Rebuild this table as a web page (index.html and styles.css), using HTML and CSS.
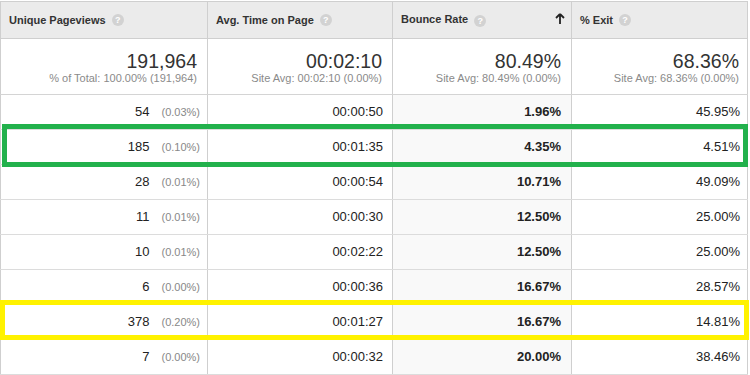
FILE: index.html
```html
<!DOCTYPE html>
<html>
<head>
  <title>Pages report</title>
  <link rel="stylesheet" href="styles.css">
</head>
<body>
  <div class="report">
    <div class="row head">
      <div class="cell">Unique Pageviews <span class="help">?</span></div>
      <div class="cell">Avg. Time on Page <span class="help">?</span></div>
      <div class="cell sorted-head">
        <span>Bounce Rate <span class="help">?</span></span>
        <svg class="sort-arrow" width="10" height="12" viewBox="0 0 10 12">
          <path d="M5 1 L1 5 M5 1 L9 5 M5 1 L5 11" stroke="#222" stroke-width="1.8" fill="none"/>
        </svg>
      </div>
      <div class="cell">% Exit <span class="help">?</span></div>
    </div>

    <div class="row summary">
      <div class="cell c1"><span class="big">191,964</span><span class="small">% of Total: 100.00% (191,964)</span></div>
      <div class="cell c2"><span class="big">00:02:10</span><span class="small">Site Avg: 00:02:10 (0.00%)</span></div>
      <div class="cell c3"><span class="big">80.49%</span><span class="small">Site Avg: 80.49% (0.00%)</span></div>
      <div class="cell c4"><span class="big">68.36%</span><span class="small">Site Avg: 68.36% (0.00%)</span></div>
    </div>

    <div class="row data">
      <div class="cell c1">54<span class="pct">(0.03%)</span></div>
      <div class="cell c2">00:00:50</div>
      <div class="cell c3 sorted">1.96%</div>
      <div class="cell c4">45.95%</div>
    </div>
    <div class="row data mark-green">
      <div class="cell c1">185<span class="pct">(0.10%)</span></div>
      <div class="cell c2">00:01:35</div>
      <div class="cell c3 sorted">4.35%</div>
      <div class="cell c4">4.51%</div>
    </div>
    <div class="row data">
      <div class="cell c1">28<span class="pct">(0.01%)</span></div>
      <div class="cell c2">00:00:54</div>
      <div class="cell c3 sorted">10.71%</div>
      <div class="cell c4">49.09%</div>
    </div>
    <div class="row data">
      <div class="cell c1">11<span class="pct">(0.01%)</span></div>
      <div class="cell c2">00:00:30</div>
      <div class="cell c3 sorted">12.50%</div>
      <div class="cell c4">25.00%</div>
    </div>
    <div class="row data">
      <div class="cell c1">10<span class="pct">(0.01%)</span></div>
      <div class="cell c2">00:02:22</div>
      <div class="cell c3 sorted">12.50%</div>
      <div class="cell c4">25.00%</div>
    </div>
    <div class="row data">
      <div class="cell c1">6<span class="pct">(0.00%)</span></div>
      <div class="cell c2">00:00:36</div>
      <div class="cell c3 sorted">16.67%</div>
      <div class="cell c4">28.57%</div>
    </div>
    <div class="row data mark-yellow">
      <div class="cell c1">378<span class="pct">(0.20%)</span></div>
      <div class="cell c2">00:01:27</div>
      <div class="cell c3 sorted">16.67%</div>
      <div class="cell c4">14.81%</div>
    </div>
    <div class="row data">
      <div class="cell c1">7<span class="pct">(0.00%)</span></div>
      <div class="cell c2">00:00:32</div>
      <div class="cell c3 sorted">20.00%</div>
      <div class="cell c4">38.46%</div>
    </div>
  </div>
</body>
</html>
```

FILE: styles.css
```css
* {
  margin: 0;
  padding: 0;
  box-sizing: border-box;
}

body {
  font-family: 'Liberation Sans', Arial, sans-serif;
  background: white;
  color: #222;
  overflow: hidden;
}

.report {
  width: 748px;
  margin-top: 1px;
  border-top: 1px solid #cfcfcf;
}

.row {
  display: grid;
  grid-template-columns: 207px 185px 179px 177px;
  border-bottom: 1px solid #dcdcdc;
  position: relative;
}

.cell {
  border-left: 1px solid #cfcfcf;
}

.cell:last-child {
  border-right: 1px solid #cfcfcf;
}

/* header */
.head {
  height: 37px;
  background: #ebebeb;
  border-bottom-color: #cfcfcf;
}

.head .cell {
  display: flex;
  align-items: center;
  padding-left: 8px;
  font-size: 11px;
  font-weight: bold;
  color: #333;
  white-space: pre;
}

.sorted-head {
  justify-content: space-between;
  padding-right: 6px;
}

.help {
  display: inline-flex;
  align-items: center;
  justify-content: center;
  width: 12px;
  height: 12px;
  margin-left: 3px;
  border-radius: 50%;
  background: #d2d2d2;
  color: white;
  font-size: 9px;
  font-weight: bold;
  vertical-align: middle;
}

.sort-arrow {
  margin-top: -2px;
}

/* summary */
.summary {
  height: 56px;
  border-bottom-color: #d4d4d4;
}

.summary .cell {
  display: flex;
  flex-direction: column;
  justify-content: center;
  align-items: flex-end;
  padding-right: 10px;
  padding-top: 1px;
}

.summary .c4 {
  padding-right: 8px;
}

.big {
  font-size: 19.5px;
  line-height: 22px;
  color: #333;
}

.small {
  font-size: 11px;
  line-height: 13px;
  color: #8a8a8a;
}

/* data rows */
.data {
  height: 35px;
}

.data .cell {
  font-size: 13px;
  line-height: 34px;
  text-align: right;
  padding-right: 9px;
  color: #222;
}

.data .c1 {
  padding-right: 7px;
}

.data .c3 {
  padding-right: 10px;
}

.data .c4 {
  padding-right: 7px;
}

.pct {
  display: inline-block;
  margin-left: 12px;
  font-size: 11px;
  color: #888;
}

.sorted {
  background: #f9f9f9;
  font-weight: bold;
}

/* hand-drawn highlight boxes */
.mark-green::after,
.mark-yellow::after {
  content: "";
  position: absolute;
  z-index: 2;
  box-sizing: border-box;
  border: 5px solid;
  pointer-events: none;
}

.mark-green::after {
  top: -6px;
  left: 2px;
  width: 746px;
  height: 43px;
  border-color: #22b14c;
}

.mark-yellow::after {
  top: -5px;
  left: 0;
  width: 749px;
  height: 40px;
  border-color: #fff200;
}
```
